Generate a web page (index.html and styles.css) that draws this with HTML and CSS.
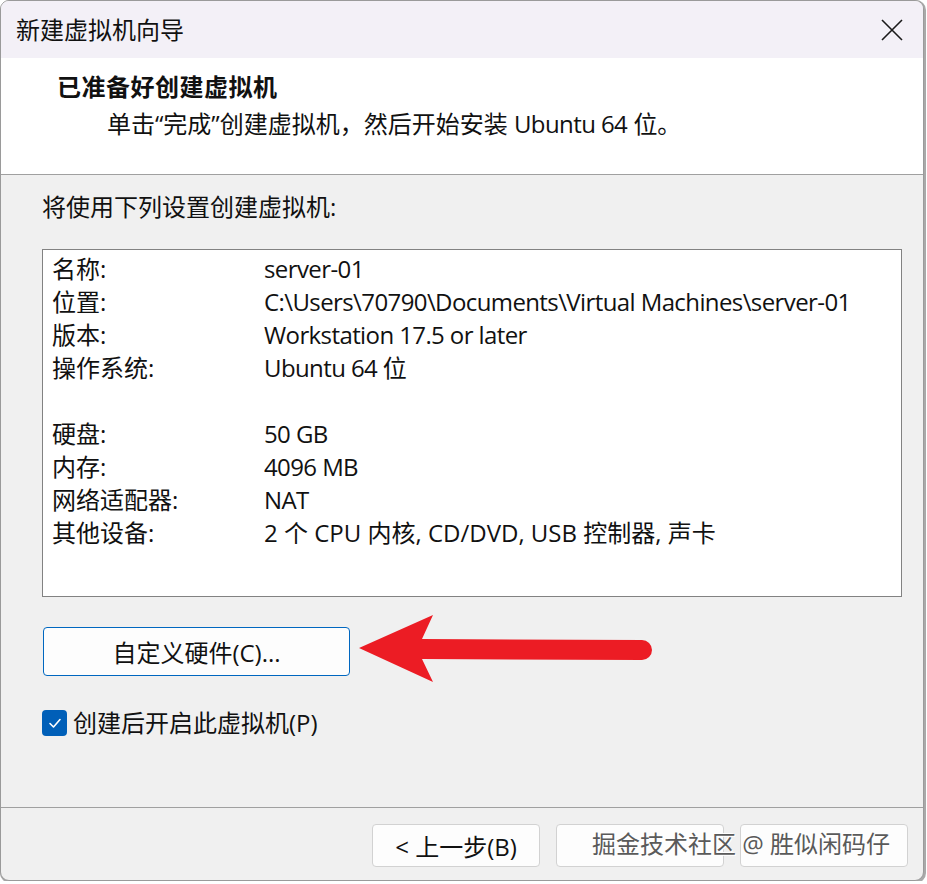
FILE: index.html
```html
<!DOCTYPE html>
<html lang="zh-CN">
<head>
<meta charset="utf-8">
<title>新建虚拟机向导</title>
<link rel="stylesheet" href="styles.css">
</head>
<body>
<div class="window">
  <div class="titlebar">
    <span class="title">新建虚拟机向导</span>
    <svg class="close" width="22" height="22" viewBox="0 0 22 22"><path d="M1 1 L21 21 M21 1 L1 21" stroke="#1a1a1a" stroke-width="1.6" fill="none"/></svg>
  </div>
  <div class="header">
    <div class="h-title">已准备好创建虚拟机</div>
    <div class="h-sub">单击“完成”创建虚拟机，然后开始安装 <span class="lat">Ubuntu 64</span> 位。</div>
  </div>
  <div class="body">
    <div class="intro">将使用下列设置创建虚拟机:</div>
    <div class="listbox">
      <div class="row"><span>名称:</span><span class="val">server-01</span></div>
      <div class="row"><span>位置:</span><span class="val">C:\Users\70790\Documents\Virtual Machines\server-01</span></div>
      <div class="row"><span>版本:</span><span class="val">Workstation 17.5 or later</span></div>
      <div class="row"><span>操作系统:</span><span class="val">Ubuntu 64 位</span></div>
      <div class="row"><span>&nbsp;</span><span>&nbsp;</span></div>
      <div class="row"><span>硬盘:</span><span class="val">50 GB</span></div>
      <div class="row"><span>内存:</span><span class="val">4096 MB</span></div>
      <div class="row"><span>网络适配器:</span><span class="val">NAT</span></div>
      <div class="row"><span>其他设备:</span><span>2 个 CPU 内核, CD/DVD, USB 控制器, 声卡</span></div>
    </div>
    <div class="custom-row">
      <button class="btn custom">自定义硬件(C)...</button>
      <svg class="arrow" width="300" height="70" viewBox="354 616 300 70"><path d="M358 650 L432 617 L421 641 L641 642 A10 10 0 0 1 641 662 L421 661 L432 684 Z" fill="#ec1c24"/></svg>
    </div>
    <label class="check">
      <span class="box"><svg width="16" height="16" viewBox="0 0 16 16"><path d="M3 8.5 L6.5 12 L13 4.5" stroke="#fff" stroke-width="1.6" fill="none" stroke-linecap="round" stroke-linejoin="round"/></svg></span>
      <span>创建后开启此虚拟机(P)</span>
    </label>
  </div>
  <div class="footer">
    <button class="btn foot">&lt; 上一步(B)</button>
    <button class="btn foot"></button>
    <button class="btn foot"></button>
    <div class="watermark">掘金技术社区 @ 胜似闲码仔</div>
  </div>
</div>
</body>
</html>
```
FILE: styles.css
```css
html, body {
  margin: 0;
  padding: 0;
  background: #ffffff;
}
body {
  font-family: "Open Sans", "Noto Sans CJK SC", sans-serif;
  font-size: 24px;
  color: #111;
}
.window {
  width: 922px;
  height: 879px;
  border: 1px solid #9a9a9a;
  border-radius: 9px;
  overflow: hidden;
  display: flex;
  flex-direction: column;
  box-shadow: 1px 1px 0 1px #a9a9a9;
  background: #f0f0f0;
}
.titlebar {
  height: 57px;
  flex: none;
  background: #f3f0f7;
  display: flex;
  align-items: center;
  justify-content: space-between;
  padding: 0 20px 0 15px;
}
.title {
  line-height: 30px;
  color: #111;
}
.close {
  display: block;
}
.header {
  flex: none;
  height: 117px;
  background: #fff;
  border-bottom: 1px solid #a0a0a0;
  padding-left: 56px;
  box-sizing: border-box;
  padding-top: 14px;
}
.h-title {
  line-height: 30px;
  font-weight: 700;
  letter-spacing: 0.5px;
}
.h-sub {
  line-height: 30px;
  margin-top: 7px;
  padding-left: 50px;
}
.lat {
  letter-spacing: -0.6px;
}
.body {
  flex: 1;
  padding: 17px 21px 0 41px;
  border-bottom: 1px solid #a0a0a0;
}
.intro {
  line-height: 30px;
}
.listbox {
  margin-top: 27px;
  height: 348px;
  box-sizing: border-box;
  border: 1px solid #828282;
  background: #fff;
  padding: 2px 0 0 9px;
}
.row {
  display: grid;
  grid-template-columns: 212px 1fr;
  line-height: 33px;
  white-space: nowrap;
}
.val {
  letter-spacing: -0.6px;
}
.custom-row {
  margin-top: 30px;
  display: flex;
  align-items: flex-start;
}
.btn {
  font: inherit;
  color: #111;
  background: #fdfdfd;
  border: 1px solid #d2d2d2;
  border-radius: 4px;
  padding: 0;
  box-sizing: border-box;
}
.custom {
  margin-left: 1px;
  width: 307px;
  height: 49px;
  border-color: #0067c0;
}
.arrow {
  margin-top: -13px;
  margin-left: 5px;
  display: block;
}
.check {
  margin-top: 24px;
  display: flex;
  align-items: center;
  gap: 6px;
  line-height: 30px;
}
.box {
  width: 25px;
  height: 26px;
  background: #005fb8;
  border-radius: 4px;
  display: flex;
  align-items: center;
  justify-content: center;
}
.footer {
  flex: none;
  height: 72px;
  position: relative;
  display: flex;
  justify-content: flex-end;
  align-items: flex-start;
  gap: 16px;
  padding: 16px 15px 0 0;
  box-sizing: border-box;
}
.foot {
  width: 168px;
  height: 43px;
}
.watermark {
  position: absolute;
  left: 591px;
  top: 21px;
  line-height: 30px;
  color: #5a5a5a;
  text-shadow: 1px 1px 0 #fff, -1px -1px 0 #fff;
  white-space: nowrap;
}
```
